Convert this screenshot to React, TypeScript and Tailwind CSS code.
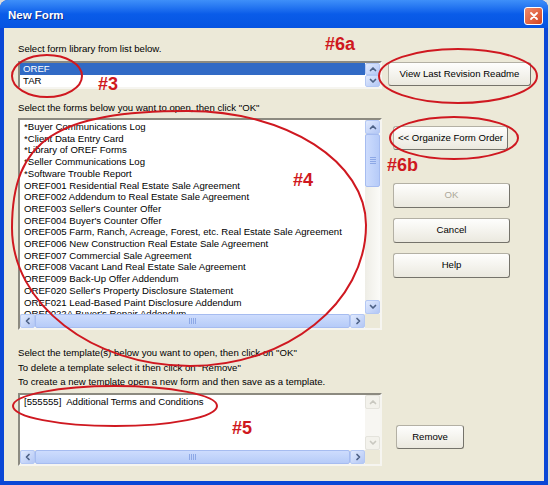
import type { ReactNode } from "react";

const FORMS = [
  "*Buyer Communications Log",
  "*Client Data Entry Card",
  "*Library of OREF Forms",
  "*Seller Communications Log",
  "*Software Trouble Report",
  "OREF001 Residential Real Estate Sale Agreement",
  "OREF002 Addendum to Real Estate Sale Agreement",
  "OREF003 Seller's Counter Offer",
  "OREF004 Buyer's Counter Offer",
  "OREF005 Farm, Ranch, Acreage, Forest, etc. Real Estate Sale Agreement",
  "OREF006 New Construction Real Estate Sale Agreement",
  "OREF007 Commercial Sale Agreement",
  "OREF008 Vacant Land Real Estate Sale Agreement",
  "OREF009 Back-Up Offer Addendum",
  "OREF020 Seller's Property Disclosure Statement",
  "OREF021 Lead-Based Paint Disclosure Addendum",
  "OREF022A Buyer's Repair Addendum",
];

type Dir = "up" | "down" | "left" | "right";

const CHEVRON: Record<Dir, string> = {
  up: "M1.5 5.5 L4 3 L6.5 5.5",
  down: "M1.5 2.5 L4 5 L6.5 2.5",
  left: "M5 1.5 L2.5 4 L5 6.5",
  right: "M3 1.5 L5.5 4 L3 6.5",
};

function Arrow({ dir, disabled, tall }: { dir: Dir; disabled?: boolean; tall?: boolean }) {
  return (
    <div
      className={`${tall ? "h-[12px]" : "h-[14px]"} w-[15px] rounded-[2px] border flex items-center justify-center ${
        disabled
          ? "border-[#e4e3dc] bg-[#f3f2ec]"
          : "border-[#b4c8f4] bg-gradient-to-br from-[#e1eafd] to-[#b3c7f5]"
      }`}
    >
      <svg width="8" height="8" viewBox="0 0 8 8">
        <path
          d={CHEVRON[dir]}
          fill="none"
          stroke={disabled ? "#c9c8c0" : "#4d6185"}
          strokeWidth="1.7"
          strokeLinecap="round"
          strokeLinejoin="round"
        />
      </svg>
    </div>
  );
}

function Grip({ vertical }: { vertical?: boolean }) {
  return (
    <div className={`flex ${vertical ? "flex-col" : "flex-row"} gap-[1px]`}>
      {[0, 1, 2, 3].map((i) => (
        <div
          key={i}
          className={vertical ? "w-[6px] h-[1px] bg-[#8da8e6]" : "w-[1px] h-[6px] bg-[#8da8e6]"}
        />
      ))}
    </div>
  );
}

function XPButton({
  children,
  className,
  disabled,
}: {
  children: ReactNode;
  className: string;
  disabled?: boolean;
}) {
  return (
    <div
      className={`${className} flex items-center justify-center rounded-[3px] border border-[#b3b0a4] border-r-[#75736b] border-b-[#75736b] bg-gradient-to-b from-[#fefefd] to-[#ebe9df] ${
        disabled ? "text-[#aca899]" : "text-black"
      }`}
    >
      {children}
    </div>
  );
}

const sunken =
  "border-2 border-t-[#8c8a80] border-l-[#8c8a80] border-r-[#f6f5f0] border-b-[#f6f5f0] bg-white";

export default function App() {
  return (
    <div className="relative w-[550px] h-[485px] bg-[#dcdcdc] overflow-hidden font-['Liberation_Sans',Arial,sans-serif] text-[9.6px] text-black">
      <div className="w-[548px] h-[485px] flex flex-col rounded-t-[8px] bg-[#0a47d6]">
        {/* title bar */}
        <div className="h-[28px] pt-[4px] flex items-center justify-between pl-[8px] pr-[5px] rounded-t-[8px] bg-gradient-to-b from-[#3e8ff9] via-[#0a5ce9] to-[#0654e2]">
          <span className="text-white font-bold text-[11.5px] [text-shadow:1px_1px_0_#0a2a8a]">
            New Form
          </span>
          <div className="w-[19px] h-[18px] rounded-[3px] border border-white bg-gradient-to-br from-[#f08a6a] to-[#d2421c] flex items-center justify-center">
            <svg width="10" height="10" viewBox="0 0 10 10">
              <path d="M2 2 L8 8 M8 2 L2 8" stroke="white" strokeWidth="1.8" strokeLinecap="round" />
            </svg>
          </div>
        </div>

        {/* client area */}
        <div className="flex-1 mx-[4px] mb-[4px] bg-[#ece9d8] pl-[14px] pt-[15px] flex flex-col">
          <div className="h-[12px] leading-[12px]">Select form library from list below.</div>

          <div className="flex items-start mt-[6px]">
            <div className={`${sunken} w-[364px] h-[28px] grid grid-cols-[1fr_15px]`}>
              <div className="leading-[12px]">
                <div className="h-[12px] bg-[#316ac5] text-white pl-[3px]">OREF</div>
                <div className="h-[12px] pl-[3px]">TAR</div>
              </div>
              <div className="flex flex-col">
                <Arrow dir="up" tall />
                <Arrow dir="down" tall />
              </div>
            </div>
            <XPButton className="ml-[6px] mt-[1px] w-[143px] h-[24px]">View Last Revision Readme</XPButton>
          </div>

          <div className="h-[12px] leading-[12px] mt-[13px]">
            Select the forms below you want to open, then click "OK"
          </div>

          <div className="flex items-start mt-[4px]">
            <div className={`${sunken} w-[364px] h-[212px] grid grid-cols-[1fr_15px] grid-rows-[1fr_14px]`}>
              <div className="overflow-hidden pt-[1px] pl-[4px] leading-[11.7px] whitespace-nowrap">
                {FORMS.map((f) => (
                  <div key={f}>{f}</div>
                ))}
              </div>
              <div className="flex flex-col bg-gradient-to-r from-[#eeede6] to-[#fbfbf8]">
                <Arrow dir="up" />
                <div className="h-[53px] rounded-[2px] border border-[#a6bcf0] bg-gradient-to-r from-[#cddcfd] to-[#b6cbf8] flex items-center justify-center">
                  <Grip vertical />
                </div>
                <div className="flex-1" />
                <Arrow dir="down" />
              </div>
              <div className="flex bg-gradient-to-b from-[#eeede6] to-[#fbfbf8]">
                <Arrow dir="left" />
                <div className="flex-1 rounded-[2px] border border-[#a6bcf0] bg-gradient-to-b from-[#cddcfd] to-[#b6cbf8] flex items-center justify-center">
                  <Grip />
                </div>
                <Arrow dir="right" />
              </div>
              <div className="bg-[#ece9d8]" />
            </div>

            <div className="ml-[11px] flex flex-col">
              <XPButton className="mt-[8px] w-[115px] h-[24px]">&lt;&lt; Organize Form Order</XPButton>
              <XPButton className="mt-[33px] w-[117px] h-[25px]" disabled>
                OK
              </XPButton>
              <XPButton className="mt-[10px] w-[117px] h-[25px]">Cancel</XPButton>
              <XPButton className="mt-[10px] w-[117px] h-[25px]">Help</XPButton>
            </div>
          </div>

          <div className="mt-[16px] leading-[14.5px]">
            <div>Select the template(s) below you want to open, then click on "OK"</div>
            <div>To delete a template select it then click on "Remove"</div>
            <div>To create a new template open a new form and then save as a template.</div>
          </div>

          <div className="flex items-start mt-[3.5px]">
            <div className={`${sunken} w-[364px] h-[73px] grid grid-cols-[1fr_15px] grid-rows-[1fr_14px]`}>
              <div className="overflow-hidden pt-[1px] pl-[4px] leading-[12px] whitespace-pre">
                {"[555555]  Additional Terms and Conditions"}
              </div>
              <div className="flex flex-col justify-between bg-[#f7f6f2]">
                <Arrow dir="up" disabled />
                <Arrow dir="down" disabled />
              </div>
              <div className="flex bg-gradient-to-b from-[#eeede6] to-[#fbfbf8]">
                <Arrow dir="left" />
                <div className="flex-1 rounded-[2px] border border-[#a6bcf0] bg-gradient-to-b from-[#cddcfd] to-[#b6cbf8] flex items-center justify-center">
                  <Grip />
                </div>
                <Arrow dir="right" />
              </div>
              <div className="bg-[#ece9d8]" />
            </div>
            <XPButton className="ml-[14px] mt-[32px] w-[68px] h-[24px]">Remove</XPButton>
          </div>
        </div>
      </div>

      {/* red annotations */}
      <svg
        className="absolute inset-0 pointer-events-none"
        width="550"
        height="485"
        viewBox="0 0 550 485"
      >
        <g fill="none" stroke="#cf1820" strokeWidth="2">
          <ellipse cx="47" cy="76" rx="35" ry="21" />
          <ellipse cx="458" cy="76" rx="79" ry="27" />
          <ellipse cx="454" cy="138" rx="64" ry="21" />
          <ellipse cx="115" cy="406" rx="102" ry="20" />
          <path d="M12 228 C12 140 56 111 188 111 C287 111 366 162 366 225 C366 303 287 366 190 366 C92 366 12 304 12 228 Z" />
        </g>
        <g fill="#cf1820" fontFamily="'Liberation Sans', Arial, sans-serif" fontWeight="bold" fontSize="18">
          <text x="325" y="50">#6a</text>
          <text x="98" y="90">#3</text>
          <text x="293" y="186">#4</text>
          <text x="387" y="171">#6b</text>
          <text x="232" y="434">#5</text>
        </g>
      </svg>
    </div>
  );
}
